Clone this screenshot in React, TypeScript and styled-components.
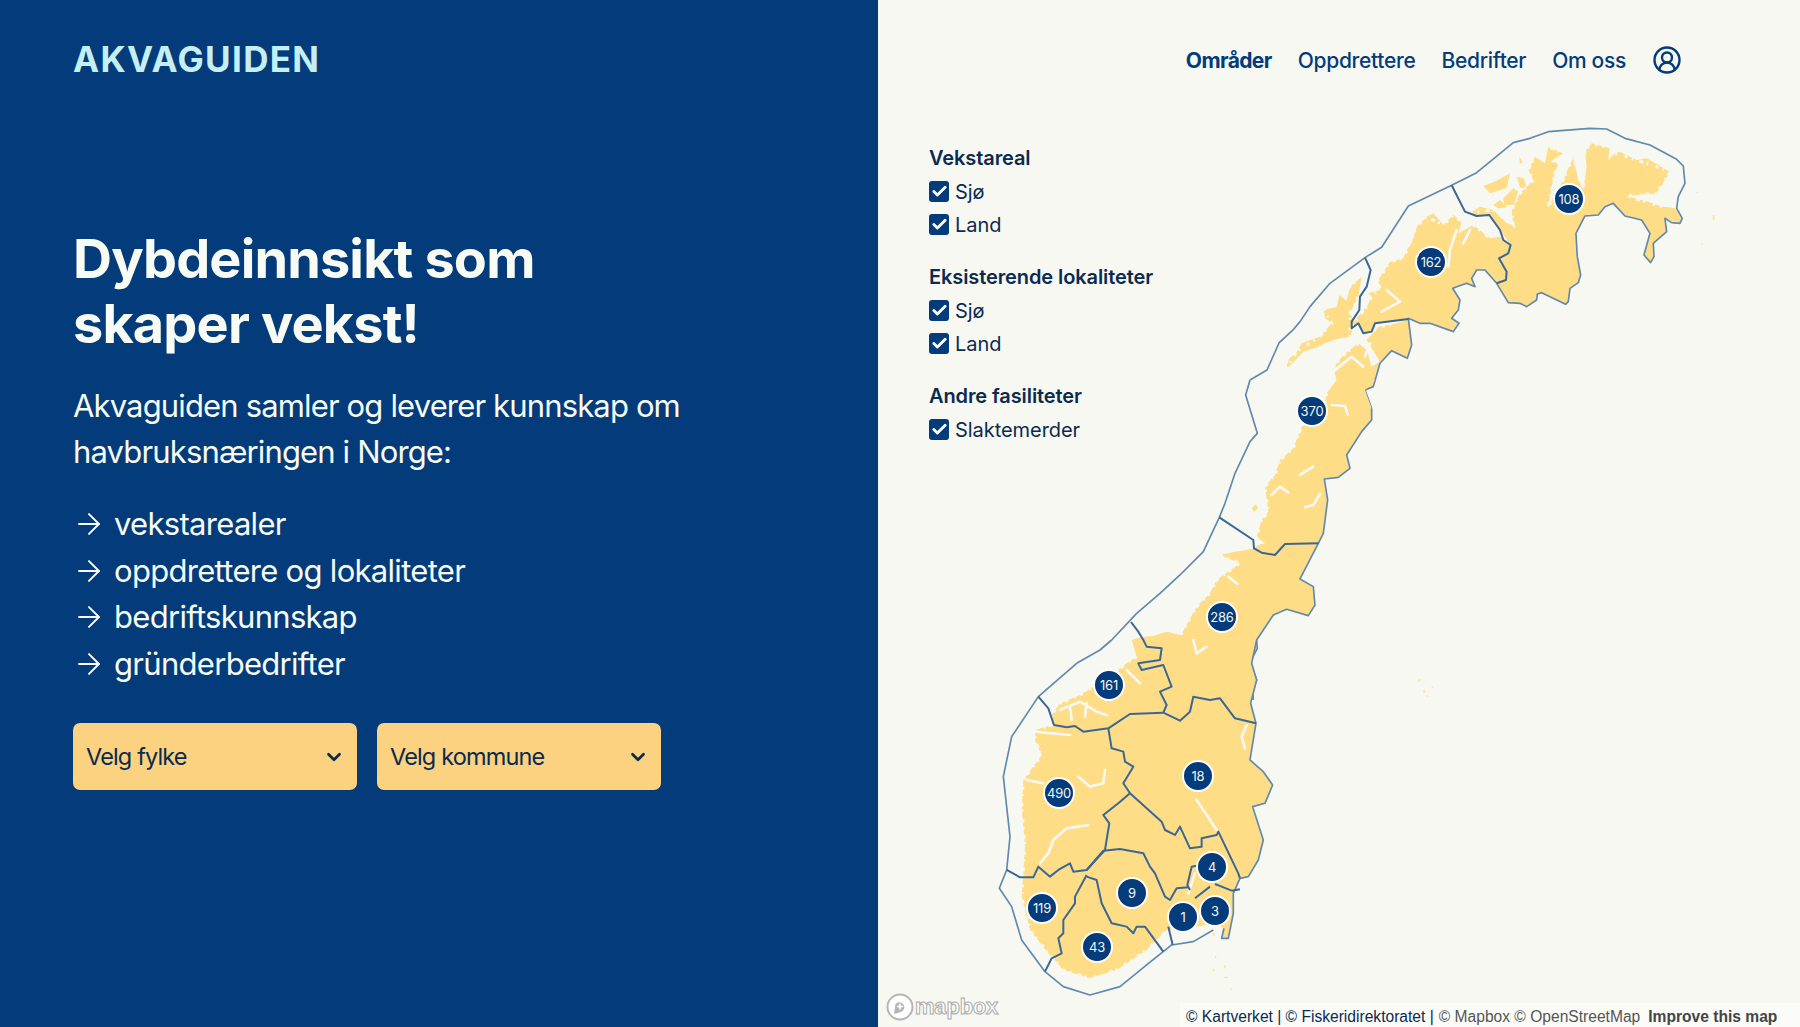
import React from 'react'
import styled, { createGlobalStyle } from 'styled-components'
import { ArrowRight, Check, ChevronDown, CircleUserRound } from 'lucide-react'

const NAVY = '#033b7b'
const INK = '#0b2a4f'
const LAND = '#fedd86'
const PAPER = '#f7f8f1'

const legend = [
    { title: 'Vekstareal', items: ['Sjø', 'Land'] },
    { title: 'Eksisterende lokaliteter', items: ['Sjø', 'Land'] },
    { title: 'Andre fasiliteter', items: ['Slaktemerder'] },
]

const pins = [
    { n: 108, x: 1569, y: 199 }, { n: 162, x: 1431, y: 262 }, { n: 370, x: 1312, y: 411 },
    { n: 286, x: 1222, y: 617 }, { n: 161, x: 1109, y: 685 }, { n: 18, x: 1198, y: 776 },
    { n: 490, x: 1059, y: 793 }, { n: 4, x: 1212, y: 867 }, { n: 9, x: 1132, y: 893 },
    { n: 119, x: 1042, y: 908 }, { n: 1, x: 1183, y: 917 }, { n: 3, x: 1215, y: 911 },
    { n: 43, x: 1097, y: 947 },
]

// map shapes were traced at 3x, so each group scales down from its own origin
const north = 'translate(1300 110) scale(.3333)'
const middle = 'translate(1180 380) scale(.3333)'
const south = 'translate(980 640) scale(.3333)'
const oslo = 'translate(1100 680) scale(.3333)'

function NorwayMap() {
    return <MapSvg viewBox="878 0 922 1027">
        <g transform={north}>
            <Land d="M-42 778-34 748-10 725 5 700 25 692 60 680 95 640 75 625 72 600 110 590 118 555 140 572 150 530 185 500 175 560 150 610 165 640 150 680 100 690 55 710 10 725Z" />
            <Land d="M80 850 110 810 100 775 130 735 175 700 200 720 215 770 240 755 200 690 235 650 290 640 325 627 335 705 322 745 275 722 240 760 220 830 195 840 215 895Z" />
            <Land d="M155 650 165 630 200 590 215 560 205 550 240 540 235 510 270 455 310 445 350 350 380 320 400 310 430 345 460 315 485 335 475 370 520 345 570 385 600 380 632 405 625 430 597 445 620 485 618 510 590 520 555 480 530 480 515 505 525 530 500 520 458 535 480 570 475 600 455 625 477 640 460 665 390 640 360 640 325 625 225 640 215 665 190 670 175 640Z" />
            <Land d="M510 310 540 290 580 300 620 340 640 345 635 300 660 250 700 210 685 180 705 140 735 160 745 110 790 130 750 155 775 160 760 205 745 290 790 210 820 140 835 210 850 240 860 170 855 125 875 100 930 115 925 150 945 130 960 125 1010 150 1040 145 1110 185 1080 235 1070 250 980 258 1060 280 1085 290 1125 295 1145 325 1140 340 1095 325 1100 365 1060 400 1062 440 1052 458 1032 435 1050 370 1025 330 975 318 940 280 915 290 895 315 855 318 828 370 832 440 842 495 835 518 810 535 805 575 797 583 725 548 712 552 710 570 680 590 660 580 625 578 590 520 618 510 620 485 597 445 625 430 632 405 600 360 568 315 530 318Z" />
            <Land d="M550 228 590 212 630 190 620 235 570 250Z" />
            <Land d="M610 265 640 235 655 245 640 285 612 285Z" />
            <Land d="M650 200 672 205 680 238 660 232Z" />
            <Land d="M580 285 600 270 622 292 595 295Z" />
            <Land d="M658 140 668 155 660 162Z" />
            <Land d="M1090 290 1125 295 1145 325 1118 335 1090 320Z" />
            <Fjord d="M470 360 450 420 445 470M350 340 330 400 300 440M510 360 490 400M260 540 300 575 245 605M210 700 195 740M100 785 155 740 190 770" />
            <Fringe d="M155 650 200 590 215 560 240 540 235 510 270 455 310 445 350 350 380 320 430 345 460 315 485 335 520 345 570 385" />
            <Fringe d="M510 310 580 300 640 345 635 300 660 250 700 210 685 180 705 140 745 110 790 130 775 160 760 205 745 290 790 210 820 140 850 240 855 125 875 100 930 115 945 130 1010 150 1110 185 1070 250 980 258 1085 290" />
            <Fringe d="M-42 778-10 725 60 680 95 640 72 600 118 555 150 530 185 500M175 560 150 610 150 680 55 710" />
            <Fringe d="M100 775 130 735 175 700 235 650 290 640" />
            <Coast d="M-150 810-99 780-63 699-21 660 0 635 30 590 90 520 195 443 245 412 325 288 455 226 530 188 640 98 690 85 745 65 870 55 920 57 975 85 1050 105 1130 148 1150 168 1155 220 1135 260 1130 295 1147 325 1140 340 1115 338 1095 325 1100 365 1060 400 1062 440 1052 458 1032 435 1050 370 1025 330 975 318 940 280 915 290 895 315 855 318 828 370 832 440 842 495 835 518 810 535 805 575 797 583 725 548 712 552 710 570 680 590 660 580 625 578 590 520 555 480 530 480 515 505 525 530 500 520 458 535 480 570 475 600 455 625 477 640 460 665 390 640 360 640 325 625 335 705 322 745 275 722 240 760 220 830 195 840 215 895" />
            <Border d="M455 226 495 305 530 318 568 315 600 360 610 390 632 405 625 430 597 445 620 485 618 510 590 520M195 443 212 480 200 530 180 560 178 600 155 635 155 655 175 640 190 670 215 665 225 640 325 627" />
        </g>

        <g transform={middle}>
            <Land d="M440 40 460 20 490 0 585 0 555 30 575 85 575 120 545 155 500 225 510 265 475 292 433 297 443 360 430 460 415 490 315 492 285 525 245 518 222 505 235 495 255 490 230 470 245 420 265 395 255 320 285 285 300 240 340 205 365 140 430 100Z" />
            <Land d="M120 525 165 515 200 510 222 505 245 518 285 525 315 492 415 490 360 597 400 620 405 675 385 707 320 688 280 705 230 780 232 805 210 848 230 900 218 925 220 960 0 960 0 770 50 680 90 640 110 600 180 550Z" />
            <Land d="M215 385 228 372 234 385 222 395Z" />
            <Fjord d="M455 75 495 78 503 103M375 382 400 375 420 342M360 285 400 260M275 345 300 320 325 337M30 805 70 790 110 795M145 590 172 612" />
            <Fringe d="M440 40 430 100 365 140 340 205 300 240 285 285 255 320 265 395 245 420 230 470 235 495" />
            <Fringe d="M120 525 180 550 110 600 90 640 50 680 0 770" />
            <Coast d="M210 0 197 45 232 160 210 185 165 280 135 370 118 412 70 515 0 585-60 640-130 700-205 780" />
            <Coast d="M575 85 575 120 545 155 500 225 510 265 475 292 433 297 443 360 430 460 415 490 360 597 400 620 405 675 385 707 320 688 280 705 230 780 232 805 210 848 230 900 218 925 220 960" />
            <Border d="M118 412 220 480 222 505 245 518 285 525 315 492 415 490" />
        </g>

        <g transform={south}>
            <Land d="M455 0 480-8 520-12 560-25 600-15 830 0 815 70 830 120 812 190 828 250 810 360 850 395 878 435 855 490 818 500 850 600 835 660 805 710 780 715 760 760 760 820 745 895 725 895 732 865 700 850 650 860 560 870 500 930 410 990 330 1015 250 990 205 940 150 870 125 770 130 690 135 620 125 500 130 420 185 345 165 300 165 270 215 255 215 225 240 190 300 165 340 140 400 100 440 70 470 50Z" />
            <Fjord d="M375 390 370 430 330 440 295 410M325 555 260 565 220 600 205 640 180 670M140 420 190 430M240 210 300 185 350 215 380 225M320 190 315 230M270 200 275 240M440 90 480 130M640 0 650 40 680 20M800 255 785 290 795 325M650 480 690 540 710 570M645 700 625 760M165 275 270 285" />
            <Fringe d="M470 50 440 70 400 100 340 140 300 165 240 190 215 225 215 255 165 270 165 300 185 345 130 420 125 500 135 620 130 690 125 770 150 870 205 940 250 990 330 1015 410 990 500 930 560 870" />
            <Coast d="M395 0 360 30 290 70 175 170 95 290 70 410 90 590 80 690 58 745 95 800 125 900 195 995 250 1040 330 1065 420 1040 500 975 575 915 640 905 700 870" />
            <Coast d="M830 0 815 70 830 120 812 190 828 250 810 360 850 395 878 435 855 490 818 500 850 600 835 660 805 710 780 715 760 760 760 820 745 895 725 895 732 865" />
            <Border d="M453-54 475-25 490 0 500 20 545 25 540 60 475 70 485 90 550 75 575 140 540 155 560 195 550 218" />
            <Border d="M175 170 205 205 222 255 260 262 285 258 310 275 385 265 450 222 550 218 600 242 630 215 640 170 690 180 720 175 765 235 828 250" />
            <Border d="M385 265 395 325 430 335 435 365 460 380 430 430 450 460 415 490 370 525 388 550 375 630 320 690 280 695 270 670 235 690 210 710 175 680 160 712 120 712 80 690" />
            <Border d="M450 460 545 545 555 570 585 585 600 560 630 625 665 620 665 595 710 585 715 575 775 700 780 715" />
            <Border d="M320 690 370 632 420 627 490 640 510 680 525 700 555 770 570 780 590 745 625 742" />
            <Border d="M320 710 350 720 365 790 395 850 440 860 460 880 470 860 495 860 550 935" />
            <Border d="M320 705 285 770 285 790 250 840 250 880 235 895 245 940 215 955 195 995" />
            <Border d="M565 860 578 915" />
        </g>

        <g transform={oslo}>
            <Border d="M300 555 275 560 262 615 270 630M330 620 285 655M395 632 365 620 345 612M395 632 420 628" />
            <Specks d="M338 760h6v8h-6zM345 828h4v6h-4zM372 855h5v10h-5zM338 868h6v5h-6zM372 890h12v4h-12zM392 925h4v6h-4z" />
        </g>

        <g transform={north}>
            <Specks d="M1190 245h4v4h-4zM1238 315h6v14h-6zM1205 400h4v4h-4z" />
        </g>
        <g transform={middle}>
            <Specks d="M715 898h6v8h-6zM730 930h6v8h-6zM740 945h4v6h-4zM755 920h4v4h-4z" />
        </g>
    </MapSvg>
}

export default function App() {
    return <>
        <GlobalStyle />
        <Page>
            <Intro>
                <Logo>AKVAGUIDEN</Logo>
                <Headline>Dybdeinnsikt som<br />skaper vekst!</Headline>
                <Lead>Akvaguiden samler og leverer kunnskap om<br />havbruksnæringen i Norge:</Lead>
                <Points>
                    {['vekstarealer', 'oppdrettere og lokaliteter', 'bedriftskunnskap', 'gründerbedrifter'].map(p =>
                        <Point key={p}><ArrowRight size={34} strokeWidth={1.4} />{p}</Point>
                    )}
                </Points>
                <Pickers>
                    <Picker>Velg fylke<ChevronDown size={22} strokeWidth={3} /></Picker>
                    <Picker>Velg kommune<ChevronDown size={22} strokeWidth={3} /></Picker>
                </Pickers>
            </Intro>
            <MapPanel>
                <NorwayMap />
                {pins.map(p => <Pin key={p.n} $x={p.x - 878} $y={p.y}>{p.n}</Pin>)}
                <Nav>
                    <NavLink $active>Områder</NavLink>
                    <NavLink>Oppdrettere</NavLink>
                    <NavLink>Bedrifter</NavLink>
                    <NavLink>Om oss</NavLink>
                    <CircleUserRound size={30} strokeWidth={1.9} color={NAVY} />
                </Nav>
                <Legend>
                    {legend.map(g => <LegendGroup key={g.title}>
                        <LegendTitle>{g.title}</LegendTitle>
                        {g.items.map(i => <LegendRow key={i}>
                            <Tick><Check size={17} strokeWidth={4} color="#fff" /></Tick>{i}
                        </LegendRow>)}
                    </LegendGroup>)}
                </Legend>
                <MapboxMark>
                    <svg width="28" height="28" viewBox="0 0 28 28">
                        <circle cx="14" cy="14" r="12.5" fill="#fff" stroke="#b5b5b5" strokeWidth="2" />
                        <path d="M8 21 9.5 11a5 5 0 1 1 5.5 8z" fill="#b5b5b5" />
                        <path d="M14 10.5v6M11 13.5h6" stroke="#fff" strokeWidth="1.6" />
                    </svg>
                    mapbox
                </MapboxMark>
                <Attribution>
                    <span>© Kartverket | © Fiskeridirektoratet |</span>
                    <Muted>© Mapbox © OpenStreetMap</Muted>
                    <b>Improve this map</b>
                </Attribution>
            </MapPanel>
        </Page>
    </>
}

const GlobalStyle = createGlobalStyle`
html, body { margin: 0; padding: 0; height: 100%; }
body { font-family: Inter, "Liberation Sans", sans-serif; }
`

const Page = styled.div`
display: grid;
grid-template-columns: 878px 1fr;
height: 100vh;
overflow: hidden;
`

const Intro = styled.section`
background: ${NAVY};
padding: 38px 0 0 73px;
color: #f7fbf3;
`

const Logo = styled.div`
font-size: 35px;
line-height: 42px;
font-weight: 700;
letter-spacing: 1.3px;
color: #c6eff3;
`

const Headline = styled.h1`
margin: 146px 0 0;
font-size: 54px;
line-height: 65px;
font-weight: 700;
letter-spacing: -0.85px;
`

const Lead = styled.p`
margin: 27px 0 0;
font-size: 31px;
line-height: 46px;
font-weight: 400;
letter-spacing: -0.85px;
`

const Points = styled.ul`
list-style: none;
margin: 26px 0 0;
padding: 0;
`

const Point = styled.li`
display: flex;
align-items: center;
gap: 8px;
margin-left: -1px;
font-size: 31px;
line-height: 46.5px;
letter-spacing: -0.7px;
svg { flex: none; }
`

const Pickers = styled.div`
display: flex;
gap: 20px;
margin-top: 36px;
`

const Picker = styled.div`
box-sizing: border-box;
width: 284px;
height: 67px;
display: flex;
align-items: center;
justify-content: space-between;
padding: 0 12px 0 13px;
background: #fbd27f;
border-radius: 7px;
color: ${INK};
font-size: 23.5px;
letter-spacing: -0.85px;
`

const MapPanel = styled.section`
position: relative;
background: ${PAPER};
color: ${INK};
`

const MapSvg = styled.svg`
position: absolute;
left: 0;
top: 0;
width: 922px;
height: 1027px;
`

const Land = styled.path`
fill: ${LAND};
`

const Fjord = styled.path`
fill: none;
stroke: ${PAPER};
stroke-width: 8;
stroke-linecap: round;
stroke-linejoin: round;
`

// crumbles the traced coastline: broken paper-coloured dashes eat into the land edge
const Fringe = styled.path`
fill: none;
stroke: ${PAPER};
stroke-width: 9;
stroke-dasharray: 9 14 5 19 12 10 6 23;
`

const Coast = styled.path`
fill: none;
stroke: #6189ae;
stroke-width: 5;
stroke-linejoin: round;
`

const Border = styled.path`
fill: none;
stroke: #3b6795;
stroke-width: 6;
stroke-linejoin: round;
`

const Specks = styled.path`
fill: ${LAND};
opacity: 0.7;
`

const Pin = styled.div<{ $x: number, $y: number }>`
position: absolute;
left: ${p => p.$x - 16}px;
top: ${p => p.$y - 16}px;
box-sizing: border-box;
width: 32px;
height: 32px;
display: flex;
align-items: center;
justify-content: center;
border: 2px solid #fff;
border-radius: 50%;
background: ${NAVY};
color: #f4f7f2;
font-size: 13px;
letter-spacing: -0.2px;
`

const Nav = styled.nav`
position: relative;
display: flex;
align-items: center;
justify-content: flex-end;
gap: 26px;
height: 30px;
padding: 45px 118px 0 0;
`

const NavLink = styled.a<{ $active?: boolean }>`
color: ${NAVY};
font-size: 21px;
font-weight: ${p => p.$active ? 700 : 500};
letter-spacing: ${p => p.$active ? -0.6 : -0.3}px;
`

const Legend = styled.div`
position: relative;
display: flex;
flex-direction: column;
gap: 20px;
width: 320px;
margin: 67px 0 0 51px;
`

const LegendGroup = styled.div`
display: flex;
flex-direction: column;
`

const LegendTitle = styled.div`
font-size: 20px;
line-height: 33px;
font-weight: 600;
letter-spacing: -0.1px;
`

const LegendRow = styled.label`
display: flex;
align-items: center;
gap: 6px;
height: 33px;
font-size: 20px;
letter-spacing: -0.05px;
`

const Tick = styled.span`
width: 20px;
height: 21px;
display: flex;
align-items: center;
justify-content: center;
border-radius: 3px;
background: ${NAVY};
`

const MapboxMark = styled.div`
position: absolute;
left: 8px;
bottom: 6px;
display: flex;
align-items: center;
gap: 1px;
font-family: "Liberation Sans", sans-serif;
font-size: 22px;
font-weight: 700;
letter-spacing: -0.2px;
color: #fff;
-webkit-text-stroke: 1px #aaa;
`

const Attribution = styled.div`
position: absolute;
right: 0;
bottom: 0;
box-sizing: border-box;
height: 24px;
width: 620px;
display: flex;
align-items: center;
gap: 5px;
padding: 3px 0 0 6px;
background: rgba(255, 255, 255, 0.5);
font-family: "Liberation Sans", sans-serif;
font-size: 15.6px;
color: #0b2a4f;
b { margin-left: 3px; color: #444; }
`

const Muted = styled.span`
color: #555;
`
